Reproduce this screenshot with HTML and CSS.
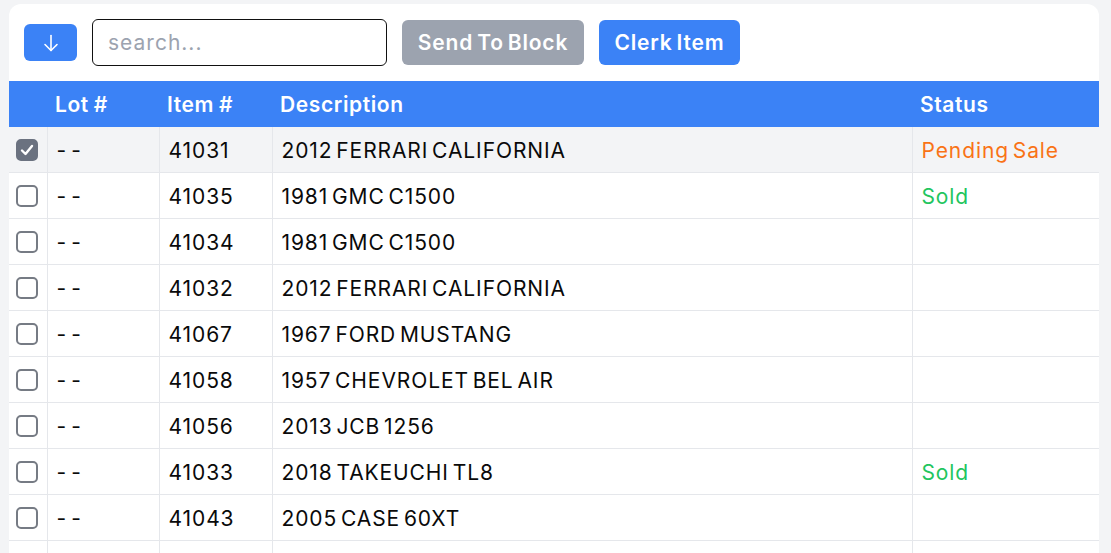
FILE: index.html
```html
<!DOCTYPE html>
<html>
<head>
<meta charset="utf-8">
<link rel="stylesheet" href="styles.css">
</head>
<body>
<div class="card">
  <div class="toolbar">
    <button class="btn-icon" aria-label="down">
      <svg width="16" height="18" viewBox="0 0 16 18" fill="none" stroke="#fff" stroke-width="1.6" stroke-linecap="round" stroke-linejoin="round"><path d="M8 1.5V16.5"/><path d="M2 10.5L8 16.5L14 10.5"/></svg>
    </button>
    <input class="search" type="text" placeholder="search...">
    <button class="btn btn-gray">Send To Block</button>
    <button class="btn btn-blue">Clerk Item</button>
  </div>
  <table class="grid">
    <colgroup>
      <col class="c-check"><col class="c-lot"><col class="c-item"><col class="c-desc"><col class="c-status">
    </colgroup>
    <thead>
      <tr><th></th><th>Lot #</th><th>Item #</th><th>Description</th><th>Status</th></tr>
    </thead>
    <tbody>
      <tr class="selected"><td><span class="cb checked"><svg width="14" height="12" viewBox="0 0 14 12" fill="none" stroke="#fff" stroke-width="2.4" stroke-linecap="round" stroke-linejoin="round"><path d="M2 6.5L5.5 10L12 2"/></svg></span></td><td class="lot">--</td><td>41031</td><td>2012 FERRARI CALIFORNIA</td><td class="pending">Pending Sale</td></tr>
      <tr><td><span class="cb"></span></td><td class="lot">--</td><td>41035</td><td>1981 GMC C1500</td><td class="sold">Sold</td></tr>
      <tr><td><span class="cb"></span></td><td class="lot">--</td><td>41034</td><td>1981 GMC C1500</td><td></td></tr>
      <tr><td><span class="cb"></span></td><td class="lot">--</td><td>41032</td><td>2012 FERRARI CALIFORNIA</td><td></td></tr>
      <tr><td><span class="cb"></span></td><td class="lot">--</td><td>41067</td><td>1967 FORD MUSTANG</td><td></td></tr>
      <tr><td><span class="cb"></span></td><td class="lot">--</td><td>41058</td><td>1957 CHEVROLET BEL AIR</td><td></td></tr>
      <tr><td><span class="cb"></span></td><td class="lot">--</td><td>41056</td><td>2013 JCB 1256</td><td></td></tr>
      <tr><td><span class="cb"></span></td><td class="lot">--</td><td>41033</td><td>2018 TAKEUCHI TL8</td><td class="sold">Sold</td></tr>
      <tr><td><span class="cb"></span></td><td class="lot">--</td><td>41043</td><td>2005 CASE 60XT</td><td></td></tr>
      <tr class="tail"><td><span class="cb"></span></td><td></td><td></td><td></td><td></td></tr>
    </tbody>
  </table>
</div>
</body>
</html>
```

FILE: styles.css
```css
html, body {
  margin: 0;
  padding: 0;
  background: #f3f4f6;
  height: 100%;
  overflow: hidden;
}
body {
  padding: 4px 12px 0 9px;
  font-family: Inter, "Noto Sans", sans-serif;
  color: #111;
}
.card {
  background: #fff;
  border-radius: 12px 12px 0 0;
  overflow: hidden;
}
.toolbar {
  display: flex;
  align-items: center;
  gap: 15px;
  padding: 15px;
  height: 47px;
}
.btn-icon {
  width: 53px;
  height: 37px;
  border: none;
  border-radius: 6px;
  background: #3b82f6;
  display: flex;
  align-items: center;
  justify-content: center;
  padding: 0;
}
.search {
  box-sizing: border-box;
  width: 295px;
  height: 47px;
  border: 1px solid #111;
  border-radius: 6px;
  padding: 0 15px;
  font-family: inherit;
  font-size: 21px;
  letter-spacing: 1px;
  color: #111;
  outline: none;
}
.search::placeholder {
  color: #9ca3af;
}
.btn {
  height: 45px;
  border: none;
  border-radius: 6px;
  padding: 0;
  font-family: inherit;
  font-size: 21px;
  font-weight: 600;
  color: #fff;
  letter-spacing: 0.8px;
  word-spacing: -2px;
}
.btn-gray { background: #9ca3af; width: 182px; }
.btn-blue { background: #3b82f6; width: 141px; }
.grid {
  width: 100%;
  border-collapse: collapse;
  table-layout: fixed;
  font-size: 21px;
}
.c-check { width: 38px; }
.c-lot { width: 112px; }
.c-item { width: 113px; }
.c-desc { width: 640px; }
.c-status { width: auto; }
.grid thead tr {
  background: #3b82f6;
  height: 46px;
}
.grid th {
  color: #fff;
  font-weight: 600;
  text-align: left;
  padding: 0 8px;
  letter-spacing: 0.6px;
  word-spacing: -1px;
}
.grid td {
  height: 43px;
  padding: 2px 9px 0 9px;
  border: 1px solid #e5e7eb;
  border-top: none;
  letter-spacing: 0.9px;
  word-spacing: -3px;
  white-space: nowrap;
  color: #0a0a0a;
}
.grid td.lot { letter-spacing: 5px; }
.grid td:first-child {
  border-left: none;
  padding: 0 0 0 7px;
  height: 45px;
}
.grid td:last-child { border-right: none; }
.grid tr.selected { background: #f3f4f6; }
.cb {
  box-sizing: border-box;
  display: flex;
  align-items: center;
  justify-content: center;
  width: 22px;
  height: 22px;
  border: 2px solid #767b84;
  border-radius: 5px;
  background: #fff;
}
.cb.checked {
  background: #6b7280;
  border-color: #6b7280;
}
.grid td.pending { color: #f97316; }
.grid td.sold { color: #22c55e; }
```
